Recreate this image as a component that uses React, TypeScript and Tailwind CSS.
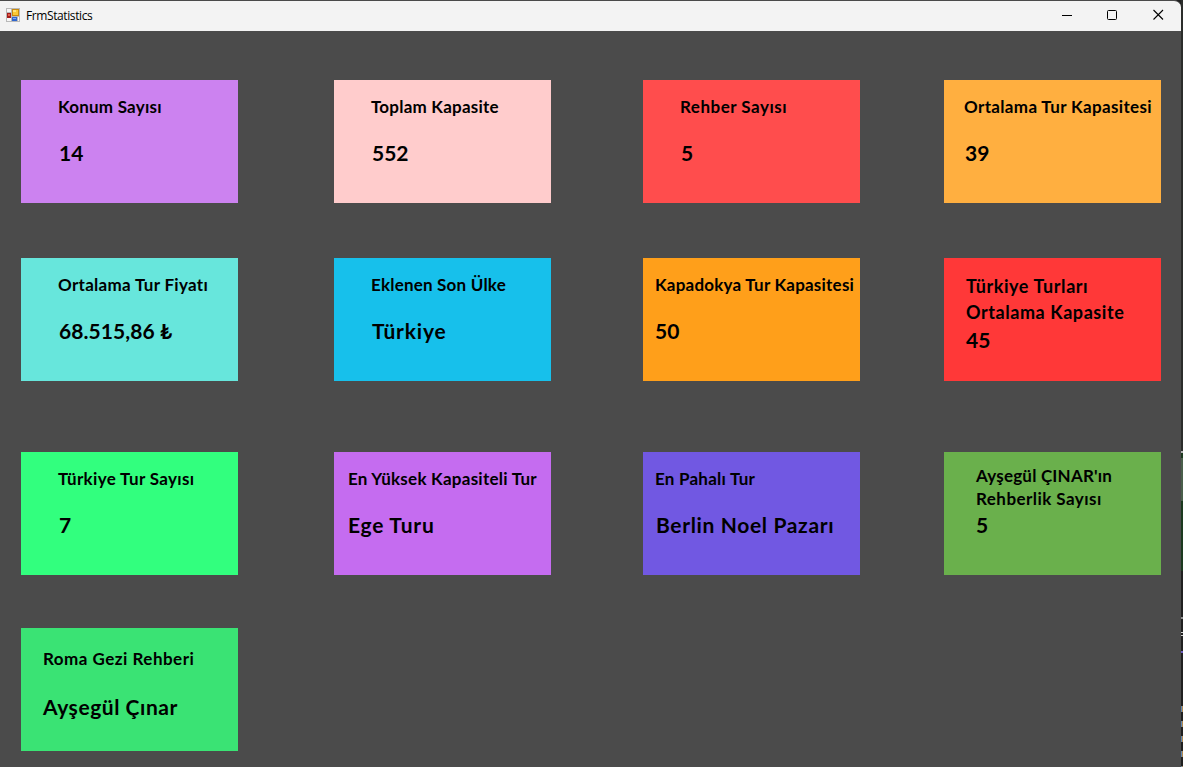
type Line = { text: string; tracking: string };

type Stat = {
  lines: Line[];
  value: string;
  card: string;
  title: string;
  amount: string;
};

const base = 'text-[17px] leading-[24px]';

const rows: { spacing: string; stats: Stat[] }[] = [
  {
    spacing: 'mt-[49px]',
    stats: [
      { lines: [{ text: 'Konum Sayısı', tracking: 'tracking-[0.22px]' }], value: '14', card: 'bg-[#cc82f0] pl-[37px] pt-[15px]', title: base, amount: 'mt-[19px] ml-px' },
      { lines: [{ text: 'Toplam Kapasite', tracking: 'tracking-[0.22px]' }], value: '552', card: 'ml-[96px] bg-[#ffcccc] pl-[37px] pt-[15px]', title: base, amount: 'mt-[19px] ml-px' },
      { lines: [{ text: 'Rehber Sayısı', tracking: 'tracking-[0.5px]' }], value: '5', card: 'ml-[92px] bg-[#ff4d4d] pl-[37px] pt-[15px]', title: base, amount: 'mt-[19px] ml-px' },
      { lines: [{ text: 'Ortalama Tur Kapasitesi', tracking: 'tracking-[0.35px]' }], value: '39', card: 'ml-[84px] bg-[#ffaf40] pl-[20px] pt-[15px]', title: base, amount: 'mt-[19px] ml-px' },
    ],
  },
  {
    spacing: 'mt-[55px]',
    stats: [
      { lines: [{ text: 'Ortalama Tur Fiyatı', tracking: 'tracking-[0.3px]' }], value: '68.515,86 ₺', card: 'bg-[#67e6dc] pl-[37px] pt-[15px]', title: base, amount: 'mt-[19px] ml-px tracking-[0.08px]' },
      { lines: [{ text: 'Eklenen Son Ülke', tracking: 'tracking-[0.2px]' }], value: 'Türkiye', card: 'ml-[96px] bg-[#17c0eb] pl-[37px] pt-[15px]', title: base, amount: 'mt-[19px] ml-px tracking-[0.8px]' },
      { lines: [{ text: 'Kapadokya Tur Kapasitesi', tracking: 'tracking-[0.22px]' }], value: '50', card: 'ml-[92px] bg-[#ff9f1a] pl-[12px] pt-[15px]', title: base, amount: 'mt-[19px]' },
      {
        lines: [
          { text: 'Türkiye Turları', tracking: 'tracking-[0.57px]' },
          { text: 'Ortalama Kapasite', tracking: 'tracking-[0.57px]' },
        ],
        value: '45', card: 'ml-[84px] bg-[#ff3838] pl-[22px] pt-[15px]', title: 'text-[18px] leading-[26px]', amount: '',
      },
    ],
  },
  {
    spacing: 'mt-[71px]',
    stats: [
      { lines: [{ text: 'Türkiye Tur Sayısı', tracking: 'tracking-[0.34px]' }], value: '7', card: 'bg-[#32ff7e] pl-[37px] pt-[15px]', title: base, amount: 'mt-[19px] ml-px' },
      { lines: [{ text: 'En Yüksek Kapasiteli Tur', tracking: 'tracking-[0.25px]' }], value: 'Ege Turu', card: 'ml-[96px] bg-[#c56cf0] pl-[14px] pt-[15px]', title: base, amount: 'mt-[19px] tracking-[0.75px]' },
      { lines: [{ text: 'En Pahalı Tur', tracking: 'tracking-[0.23px]' }], value: 'Berlin Noel Pazarı', card: 'ml-[92px] bg-[#7158e2] pl-[12px] pt-[15px]', title: base, amount: 'mt-[19px] ml-px tracking-[0.65px]' },
      {
        lines: [
          { text: "Ayşegül ÇINAR'ın", tracking: 'tracking-[0.2px]' },
          { text: 'Rehberlik Sayısı', tracking: 'tracking-[0.45px]' },
        ],
        value: '5', card: 'ml-[84px] bg-[#6ab04c] pl-[32px] pt-[12px]', title: 'text-[17px] leading-[23px]', amount: '',
      },
    ],
  },
  {
    spacing: 'mt-[53px]',
    stats: [
      { lines: [{ text: 'Roma Gezi Rehberi', tracking: 'tracking-[0.48px]' }], value: 'Ayşegül Çınar', card: 'bg-[#3ae374] pl-[22px] pt-[19px]', title: base, amount: 'mt-[21px] tracking-[0.55px]' },
    ],
  },
];

function FormIcon() {
  return (
    <svg className="-mt-[2px]" width="14" height="14" viewBox="0 0 14 14" shapeRendering="crispEdges">
      <rect width="14" height="14" fill="#b9b9b9" />
      <rect x="1" y="1" width="4" height="3" fill="#f6f6f6" />
      <rect x="1" y="10" width="4" height="3" fill="#f6f6f6" />
      <rect x="12" y="9" width="1" height="4" fill="#f6f6f6" />
      <rect x="1" y="5" width="4" height="5" fill="#a51c1c" />
      <rect x="2" y="6" width="2" height="2" fill="#e0604c" />
      <rect x="6" y="1" width="7" height="7" fill="#c78a10" />
      <rect x="7" y="2" width="5" height="5" fill="#fbc935" />
      <rect x="7" y="2" width="3" height="2" fill="#ffe37a" />
      <rect x="6" y="9" width="5" height="4" fill="#2f66cf" />
      <rect x="7" y="10" width="3" height="1" fill="#7fa8f5" />
    </svg>
  );
}

function TitleBar() {
  return (
    <header className="flex h-[31px] items-center rounded-tr-[7px] border-t border-[#4a4a4a] bg-[#f3f3f3] pl-[6px] text-black">
      <FormIcon />
      <span className="ml-[6px] font-['Open_Sans',sans-serif] text-[12px] leading-[16px] tracking-[-0.4px]">FrmStatistics</span>
      <div className="ml-auto flex items-center pb-[3px] pr-[17px]">
        <svg className="mr-[35px]" width="10" height="11" viewBox="0 0 10 11"><path d="M0 6.5H10" stroke="#000" /></svg>
        <svg className="mr-[36px]" width="10" height="11" viewBox="0 0 10 11" fill="none"><rect x=".5" y="1.5" width="9" height="9" rx="1" stroke="#000" /></svg>
        <svg width="11" height="11" viewBox="0 0 11 11"><path d="M.5 1L10 10.5M10 1L.5 10.5" stroke="#000" strokeWidth="1.1" /></svg>
      </div>
    </header>
  );
}

function StatCard({ stat }: { stat: Stat }) {
  return (
    <section className={`h-[123px] w-[217px] shrink-0 whitespace-nowrap ${stat.card}`}>
      <h2 className={`font-bold ${stat.title}`}>
        {stat.lines.map((line) => (
          <span key={line.text} className={`block ${line.tracking}`}>{line.text}</span>
        ))}
      </h2>
      <p className={`text-[21px] font-bold leading-[30px] ${stat.amount}`}>{stat.value}</p>
    </section>
  );
}

export default function App() {
  return (
    <div className="flex h-[767px] w-[1183px] overflow-hidden bg-[#202020] font-['Lato','Noto_Sans',sans-serif] text-black">
      <div className="flex w-[1181px] shrink-0 flex-col">
        <TitleBar />
        <main className="flex-1 bg-[#4b4b4b] pl-[21px]">
          <div className="flex flex-col">
            {rows.map((row) => (
              <div key={row.spacing} className={`flex ${row.spacing}`}>
                {row.stats.map((stat) => (
                  <StatCard key={stat.lines[0].text} stat={stat} />
                ))}
              </div>
            ))}
          </div>
        </main>
      </div>
      <div className="flex w-[2px] flex-col *:shrink-0">
        <div className="h-[451px] bg-[#2b2d2b]" />
        <div className="h-[2px] bg-[#b4b4b4]" />
        <div className="h-[5px] bg-[#1c3a1f]" />
        <div className="h-[43px] bg-[#4a5f4b]" />
        <div className="h-[70px] bg-[#1c3a1f]" />
        <div className="h-[46px] bg-[#202020]" />
        <div className="h-[2px] bg-[#8c8c8c]" />
        <div className="h-[13px] bg-[#202020]" />
        <div className="h-px bg-[#d0d0d0]" />
        <div className="h-[2px] bg-[#202020]" />
        <div className="h-px bg-[#d0d0d0]" />
        <div className="h-[15px] bg-[#202020]" />
        <div className="h-[2px] bg-[#6f5fc0]" />
        <div className="h-[53px] bg-[#202020]" />
        {[0, 1, 2, 3, 4].map((n) => (
          <div key={n} className="flex h-[15px] flex-col">
            <div className="flex h-[6px]">
              <div className="w-px bg-[#5f86b0]" />
              <div className="w-px bg-[#b08850]" />
            </div>
          </div>
        ))}
      </div>
    </div>
  );
}
